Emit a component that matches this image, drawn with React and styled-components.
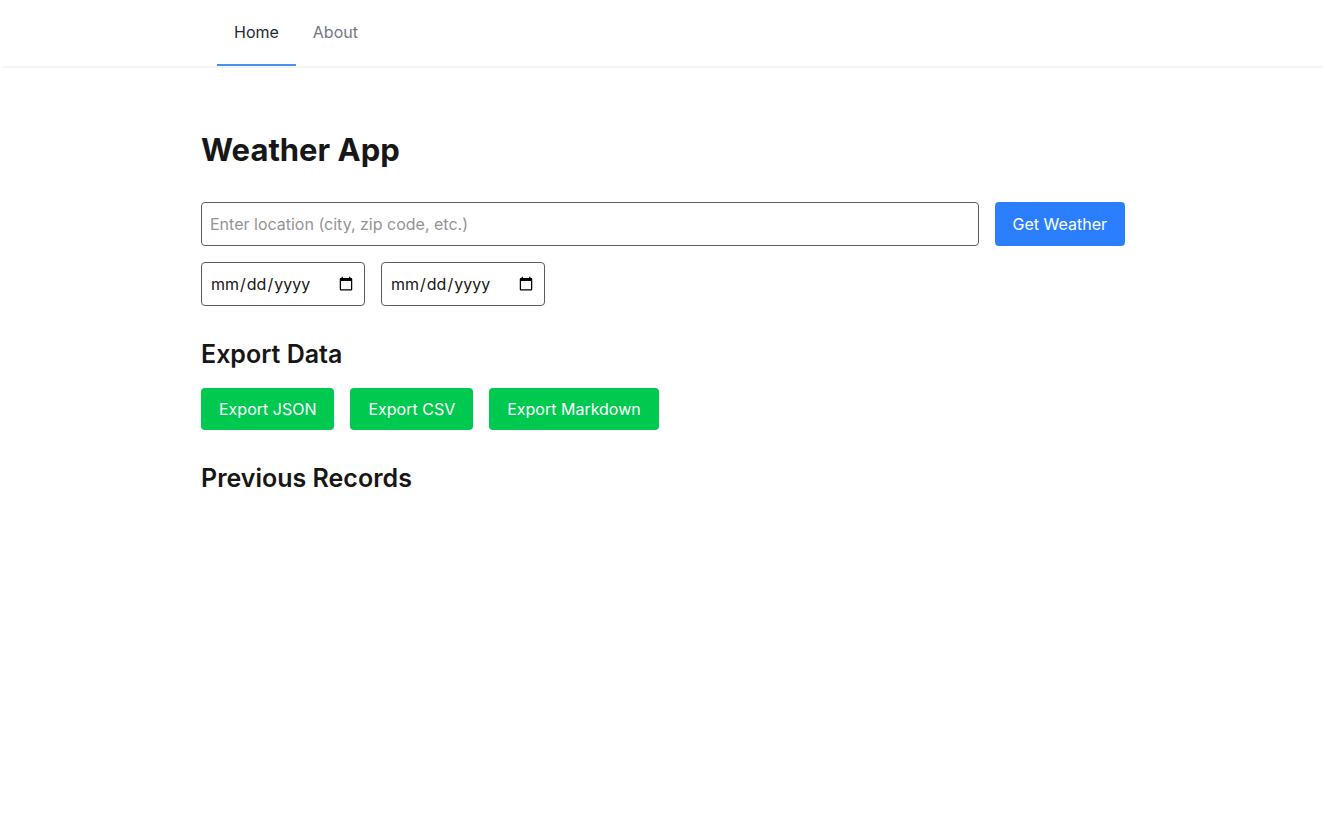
import React from 'react';
import styled, { createGlobalStyle } from 'styled-components';

const GlobalStyle = createGlobalStyle`
  *, *::before, *::after { box-sizing: border-box; }
  body {
    margin: 0;
    background: #fff;
    color: #171717;
    font-family: Inter, "Liberation Sans", sans-serif;
    font-size: 16px;
    line-height: 24px;
  }
  h1, h2 { margin: 0; }
  button, input { font: inherit; color: inherit; margin: 0; }
`;

const Header = styled.header`
  margin: 0 3px;
  border-bottom: 2px solid #f5f5f6;
`;

const Nav = styled.nav`
  display: flex;
  max-width: 924px;
  margin: 0 auto;
  padding: 0 16px;
`;

const NavLink = styled.a`
  padding: 20px 17px;
  border-bottom: 2px solid ${(p) => (p.$active ? '#4a8ef8' : 'transparent')};
  color: ${(p) => (p.$active ? '#1e2939' : '#737884')};
  text-decoration: none;
`;

const Main = styled.main`
  max-width: 956px;
  margin: 0 auto;
  padding: 62px 16px 32px;
`;

const Title = styled.h1`
  font-size: 31px;
  line-height: 40px;
  font-weight: 700;
`;

const Form = styled.form`
  display: flex;
  flex-direction: column;
  gap: 16px;
  margin-top: 32px;
`;

const Row = styled.div`
  display: flex;
  gap: 16px;
`;

const Field = styled.input`
  height: 44px;
  padding: 8px;
  border: 1px solid #5c5c5c;
  border-radius: 4px;
  background: #fff;
  &::placeholder { color: #949494; opacity: 1; }
`;

const LocationField = styled(Field)`
  flex: 1;
  min-width: 0;
`;

const DateField = styled(Field)`
  width: 164px;
`;

const Button = styled.button`
  padding: 9px 18px;
  border: 0;
  border-radius: 4px;
  background: ${(p) => (p.$tone === 'primary' ? '#2b7fff' : '#00c950')};
  color: #fff;
  cursor: pointer;
`;

const Section = styled.section`
  margin-top: 32px;
`;

const Heading = styled.h2`
  margin-bottom: 18px;
  font-size: 25px;
  line-height: 32px;
  font-weight: 600;
`;

export default function App() {
  return (
    <>
      <GlobalStyle />
      <Header>
        <Nav aria-label="Main">
          <NavLink href="#home" $active aria-current="page">Home</NavLink>
          <NavLink href="#about">About</NavLink>
        </Nav>
      </Header>
      <Main>
        <Title>Weather App</Title>
        <Form onSubmit={(e) => e.preventDefault()}>
          <Row>
            <LocationField type="text" aria-label="Location" placeholder="Enter location (city, zip code, etc.)" />
            <Button type="submit" $tone="primary">Get Weather</Button>
          </Row>
          <Row>
            <DateField type="date" aria-label="Start date" />
            <DateField type="date" aria-label="End date" />
          </Row>
        </Form>
        <Section>
          <Heading>Export Data</Heading>
          <Row>
            <Button type="button">Export JSON</Button>
            <Button type="button">Export CSV</Button>
            <Button type="button">Export Markdown</Button>
          </Row>
        </Section>
        <Section>
          <Heading>Previous Records</Heading>
        </Section>
      </Main>
    </>
  );
}
